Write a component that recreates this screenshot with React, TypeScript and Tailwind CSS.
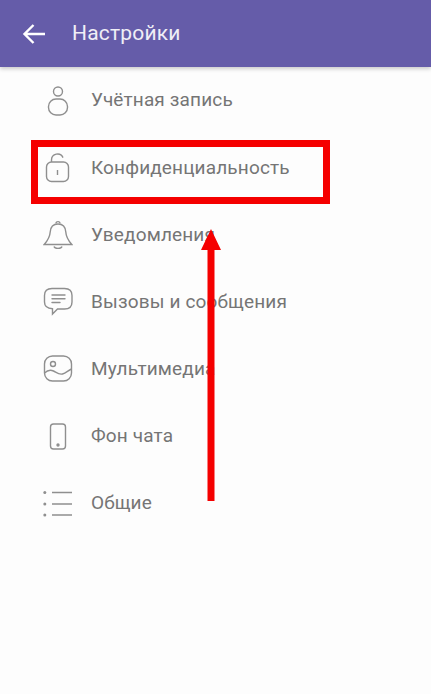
import React from 'react';

const iconClass = 'w-[30px] h-[30px] text-[#8f8f8f]';

const UserIcon = () => (
  <svg viewBox="0 0 30 30" className={iconClass} fill="none" stroke="currentColor" strokeWidth="1.4">
    <circle cx="15" cy="5.5" r="4.500" />
    <rect x="5.500" y="13" width="19" height="16" rx="7.500" />
  </svg>
);

const LockIcon = () => (
  <svg viewBox="0 0 30 30" className={iconClass} fill="none" stroke="currentColor" strokeWidth="1.4">
    <rect x="3.500" y="9" width="22" height="19.500" rx="5" />
    <path d="M8.500 9V7a6 6 0 0 1 11.500-2.400" />
    <path d="M14.500 17v5" />
  </svg>
);

const BellIcon = () => (
  <svg viewBox="0 0 30 30" className={iconClass} fill="none" stroke="currentColor" strokeWidth="1.4">
    <path d="M15 4c-5 0-7.500 3.500-7.800 8-.3 5-2 8-6 12.500h27.600c-4-4.500-5.700-7.500-6-12.500C22.500 7.500 20 4 15 4Z" />
    <path d="M13 3.500c0-2.500 4-2.500 4 0" />
    <path d="M11 26.500c.8 2.500 7.200 2.500 8 0" />
  </svg>
);

const ChatIcon = () => (
  <svg viewBox="0 0 30 30" className={iconClass} fill="none" stroke="currentColor" strokeWidth="1.4" strokeLinecap="round">
    <path d="M9 1.500h12.500c4.500 0 7.500 2.500 7.500 7v6.500c0 4.500-3 7-7.500 7h-7l-5 5v-5.200C4 21.500 1.500 19 1.500 15V8.500c0-4.500 3-7 7.500-7Z" />
    <path d="M9 8h13M9 11.800h13M9 15.500h8" />
  </svg>
);

const ImageIcon = () => (
  <svg viewBox="0 0 30 30" className={iconClass} fill="none" stroke="currentColor" strokeWidth="1.4">
    <rect x="1.500" y="2" width="27" height="25" rx="8" />
    <circle cx="10" cy="10" r="2.500" />
    <path d="M1.500 19c3-3 6-3.500 9-2s5.500 4 9 3 5.500-3.500 9-5" />
  </svg>
);

const PhoneIcon = () => (
  <svg viewBox="0 0 30 30" className={iconClass} fill="none" stroke="currentColor" strokeWidth="1.4">
    <rect x="7.500" y="2" width="15" height="25" rx="3" />
    <circle cx="15" cy="23" r="1" fill="currentColor" />
  </svg>
);

const ListIcon = () => (
  <svg viewBox="0 0 30 30" className={iconClass} fill="none" stroke="currentColor" strokeWidth="1.4">
    <path d="M9 3.500h20M9 15h20M9 26h20" />
    <circle cx="1.800" cy="3.500" r="1.500" fill="currentColor" stroke="none" />
    <circle cx="1.800" cy="15" r="1.500" fill="currentColor" stroke="none" />
    <circle cx="1.800" cy="26" r="1.500" fill="currentColor" stroke="none" />
  </svg>
);

const items = [
  { label: 'Учётная запись', icon: <UserIcon /> },
  { label: 'Конфиденциальность', icon: <LockIcon /> },
  { label: 'Уведомления', icon: <BellIcon /> },
  { label: 'Вызовы и сообщения', icon: <ChatIcon /> },
  { label: 'Мультимедиа', icon: <ImageIcon /> },
  { label: 'Фон чата', icon: <PhoneIcon /> },
  { label: 'Общие', icon: <ListIcon /> },
];

export default function App() {
  return (
    <div className="relative w-[431px] h-[694px] overflow-hidden bg-[#fdfdfd] font-['Roboto',sans-serif]">
      {/* Header */}
      <div className="flex items-center h-[67px] bg-[#655ca9] shadow-[0_2px_4px_rgba(0,0,0,0.2)]">
        <svg viewBox="0 0 24 24" className="w-[24px] h-[24px] ml-[22px] text-white" fill="none" stroke="currentColor" strokeWidth="2.400">
          <path d="M23 12H3M11.500 3 2.500 12l9 9" />
        </svg>
        <span className="ml-[26px] text-[21px] text-white/90 tracking-[0.2px]">Настройки</span>
      </div>

      {/* Settings list */}
      <div className="flex flex-col">
        {items.map((item, index) => (
          <div key={index} className="flex items-center h-[67.200px] pl-[43px]">
            {item.icon}
            <span className="ml-[18px] text-[19px] text-[#757575] tracking-[0.15px]">{item.label}</span>
          </div>
        ))}
      </div>

      {/* Red annotation */}
      <div className="absolute left-[31px] top-[140px] w-[299px] h-[64px] border-[7px] border-[#f50000]" />
      <svg viewBox="0 0 24 273" className="absolute left-[199px] top-[229px] w-[24px] h-[273px]">
        <path d="M12 0 22 21H15.500V272H8.500V21H2Z" fill="#f50000" />
      </svg>
    </div>
  );
}
